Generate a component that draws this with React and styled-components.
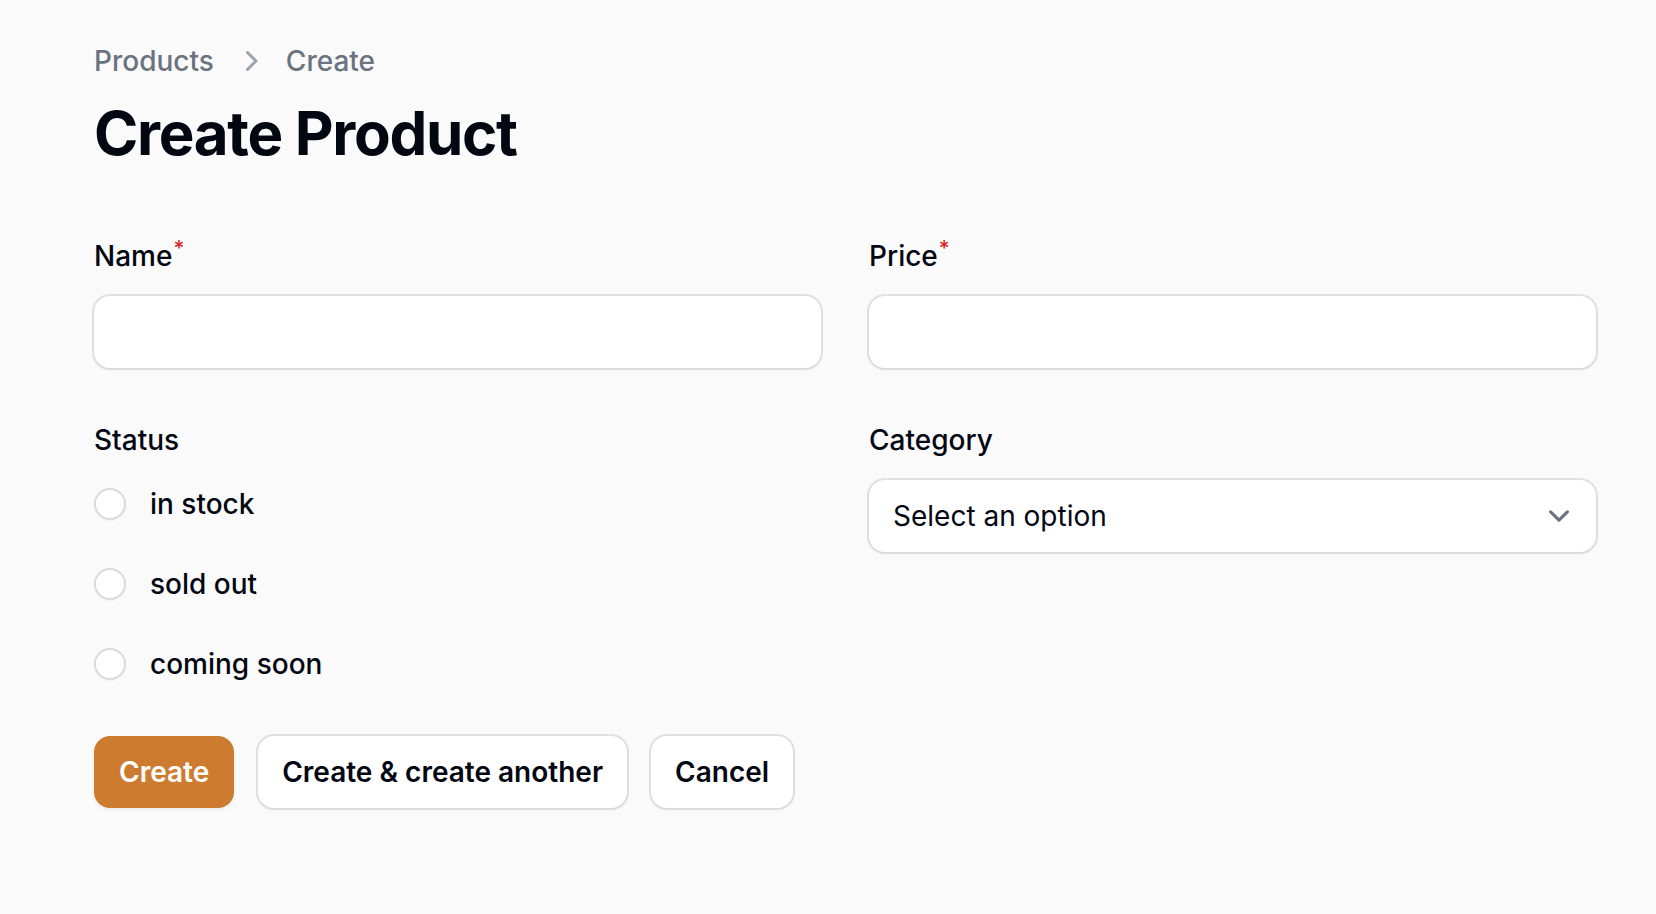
import React from 'react';
import styled, { createGlobalStyle } from 'styled-components';

const GlobalStyle = createGlobalStyle`
  html, body {
    margin: 0;
    padding: 0;
    background: #fafafa;
  }
  body {
    font-family: 'Inter', 'Noto Sans', sans-serif;
    color: #030712;
    -webkit-font-smoothing: antialiased;
  }
  * {
    box-sizing: border-box;
  }
`;

export const Page = styled.main`
  min-height: 914px;
  padding: 41px 60px 48px 94px;
  background: #fafafa;
`;

export const Breadcrumbs = styled.nav`
  display: flex;
  align-items: center;
  column-gap: 16px;
  height: 40px;
  font-size: 28px;
  line-height: 40px;
  font-weight: 500;
  color: #6b7280;

  svg {
    width: 40px;
    height: 40px;
    color: #9ca3af;
  }
`;

export const Heading = styled.h1`
  margin: 16px 0 0;
  font-size: 60px;
  line-height: 72px;
  font-weight: 700;
  letter-spacing: -1.3px;
  color: #030712;
`;

export const FormGrid = styled.form`
  margin-top: 63px;
  display: grid;
  grid-template-columns: 1fr 1fr;
  column-gap: 48px;
  row-gap: 48px;
  align-items: start;
`;

export const Field = styled.div`
  display: flex;
  flex-direction: column;
  row-gap: 16px;
`;

export const Label = styled.label`
  font-size: 28px;
  line-height: 48px;
  font-weight: 500;
  color: #030712;

  sup {
    color: #dc2626;
    font-weight: 500;
    font-size: 21px;
    line-height: 0;
    margin-left: 1px;
  }
`;

export const Input = styled.input`
  display: block;
  width: 100%;
  height: 72px;
  border: none;
  border-radius: 16px;
  background: #fff;
  box-shadow: 0 0 0 2px rgba(3, 7, 18, 0.1), 0 2px 4px rgba(0, 0, 0, 0.04);
  padding: 0 24px;
  font-family: inherit;
  font-size: 28px;
  color: #030712;
  outline: none;
`;

export const SelectBox = styled.div`
  display: flex;
  align-items: center;
  justify-content: space-between;
  height: 72px;
  border-radius: 16px;
  background: #fff;
  box-shadow: 0 0 0 2px rgba(3, 7, 18, 0.1), 0 2px 4px rgba(0, 0, 0, 0.04);
  padding: 0 16px 0 24px;
  font-size: 28px;
  line-height: 48px;
  color: #030712;

  svg {
    width: 42px;
    height: 42px;
    color: #6b7280;
  }
`;

export const RadioList = styled.div`
  display: flex;
  flex-direction: column;
  row-gap: 32px;
`;

export const RadioItem = styled.label`
  display: flex;
  align-items: center;
  column-gap: 24px;
  font-size: 28px;
  line-height: 48px;
  font-weight: 500;
  color: #030712;
`;

export const RadioCircle = styled.span`
  width: 32px;
  height: 32px;
  flex: none;
  border-radius: 50%;
  background: #fff;
  box-shadow: inset 0 0 0 2px rgba(3, 7, 18, 0.15), 0 1px 2px rgba(0, 0, 0, 0.04);
`;

export const Actions = styled.div`
  margin-top: 48px;
  display: flex;
  column-gap: 24px;
`;

export const Button = styled.button`
  height: 72px;
  padding: 0 ${(p) => (p.$primary ? '25px' : '24px')};
  border: none;
  border-radius: 16px;
  font-family: inherit;
  font-size: 28px;
  line-height: 40px;
  font-weight: 600;
  cursor: pointer;
  background: ${(p) => (p.$primary ? '#cd7b2f' : '#fff')};
  color: ${(p) => (p.$primary ? '#fff' : '#030712')};
  box-shadow: ${(p) =>
    p.$primary
      ? '0 2px 4px rgba(0, 0, 0, 0.06)'
      : '0 0 0 2px rgba(3, 7, 18, 0.1), 0 2px 4px rgba(0, 0, 0, 0.04)'};
`;

const ChevronRight = () => (
  <svg viewBox="0 0 20 20" fill="currentColor" aria-hidden="true">
    <path
      fillRule="evenodd"
      d="M8.22 5.22a.75.75 0 0 1 1.06 0l4.25 4.25a.75.75 0 0 1 0 1.06l-4.25 4.25a.75.75 0 0 1-1.06-1.06L11.94 10 8.22 6.28a.75.75 0 0 1 0-1.06Z"
      clipRule="evenodd"
    />
  </svg>
);

const ChevronDown = () => (
  <svg viewBox="0 0 20 20" fill="none" aria-hidden="true">
    <path
      d="m6 8 4 4 4-4"
      stroke="currentColor"
      strokeWidth="1.5"
      strokeLinecap="round"
      strokeLinejoin="round"
    />
  </svg>
);

const statuses = ['in stock', 'sold out', 'coming soon'];

const App = () => {
  return (
    <>
      <GlobalStyle />
      <Page>
        <Breadcrumbs>
          <span>Products</span>
          <ChevronRight />
          <span>Create</span>
        </Breadcrumbs>
        <Heading>Create Product</Heading>

        <FormGrid onSubmit={(e) => e.preventDefault()}>
          <Field>
            <Label>
              Name<sup>*</sup>
            </Label>
            <Input type="text" />
          </Field>
          <Field>
            <Label>
              Price<sup>*</sup>
            </Label>
            <Input type="text" />
          </Field>
          <Field>
            <Label>Status</Label>
            <RadioList>
              {statuses.map((status) => (
                <RadioItem key={status}>
                  <RadioCircle />
                  {status}
                </RadioItem>
              ))}
            </RadioList>
          </Field>
          <Field>
            <Label>Category</Label>
            <SelectBox>
              <span>Select an option</span>
              <ChevronDown />
            </SelectBox>
          </Field>
        </FormGrid>

        <Actions>
          <Button $primary>Create</Button>
          <Button>Create &amp; create another</Button>
          <Button>Cancel</Button>
        </Actions>
      </Page>
    </>
  );
};

export default App;
